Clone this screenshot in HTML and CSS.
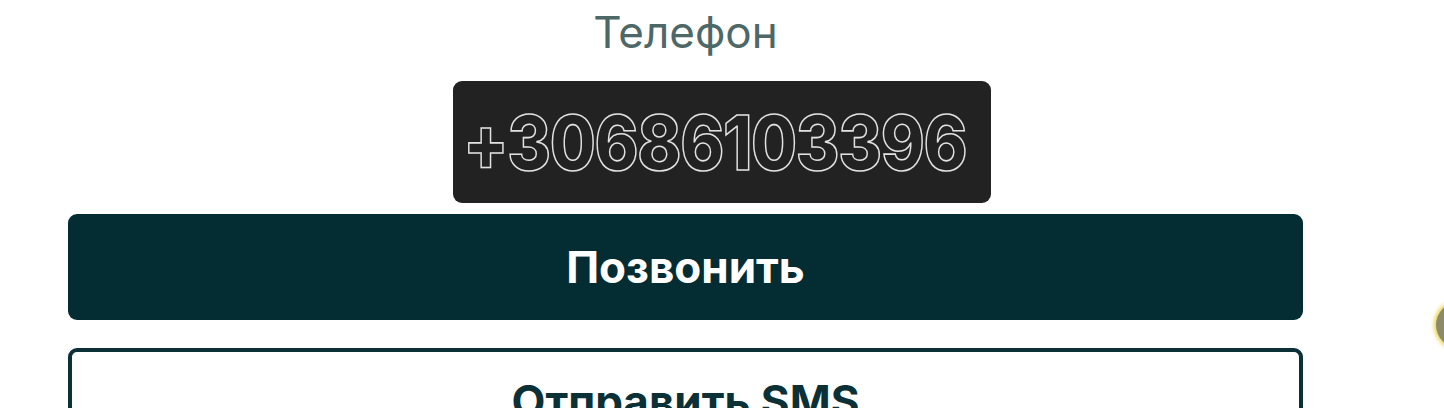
FILE: index.html
```html
<!DOCTYPE html>
<html lang="ru">
<head>
<meta charset="utf-8">
<link rel="stylesheet" href="styles.css">
</head>
<body>
<main class="page">
  <div class="label">Телефон</div>
  <div class="phone-box"><span class="phone">+30686103396</span></div>
  <button class="btn btn-primary">Позвонить</button>
  <button class="btn btn-outline">Отправить SMS</button>
</main>
<div class="fab"></div>
</body>
</html>
```
FILE: styles.css
```css
html, body {
  margin: 0;
  padding: 0;
  background: #ffffff;
  overflow: hidden;
}
body {
  width: 1444px;
  height: 408px;
  position: relative;
  font-family: Inter, "Noto Sans", sans-serif;
}
.page {
  width: 1235px;
  height: 408px;
  margin-left: 68px;
  display: flex;
  flex-direction: column;
  overflow: hidden;
}
.label {
  text-align: center;
  font-size: 44px;
  font-weight: 400;
  line-height: 58px;
  margin-top: 3px;
  color: #4d6867;
}
.phone-box {
  margin-top: 20px;
  margin-left: 385px;
  width: 538px;
  height: 122px;
  box-sizing: border-box;
  background: #222222;
  border-radius: 9px;
  display: flex;
  align-items: center;
  padding-left: 10px;
  flex-shrink: 0;
}
.phone {
  display: inline-block;
  font-size: 76px;
  font-weight: 800;
  line-height: 1;
  color: transparent;
  -webkit-text-stroke: 1.6px #e2e2e2;
  letter-spacing: -1.5px;
  transform: scaleX(0.877);
  transform-origin: left center;
  white-space: nowrap;
}
.btn {
  font-family: inherit;
  width: 1235px;
  border-radius: 9px;
  font-size: 44px;
  font-weight: 700;
  cursor: pointer;
  padding: 0;
  box-sizing: border-box;
  flex-shrink: 0;
}
.btn-primary {
  margin-top: 11px;
  height: 106px;
  background: #032d33;
  color: #ffffff;
  border: none;
}
.btn-outline {
  margin-top: 28px;
  height: 106px;
  background: #ffffff;
  color: #0b3036;
  border: 4px solid #0b3036;
  display: flex;
  align-items: flex-start;
  justify-content: center;
  padding-top: 22px;
}
.fab {
  position: absolute;
  left: 1436px;
  top: 302px;
  width: 46px;
  height: 46px;
  border-radius: 50%;
  background: #8d8a6a;
  box-shadow: 0 0 4px 2px #e8d24a;
}
```
